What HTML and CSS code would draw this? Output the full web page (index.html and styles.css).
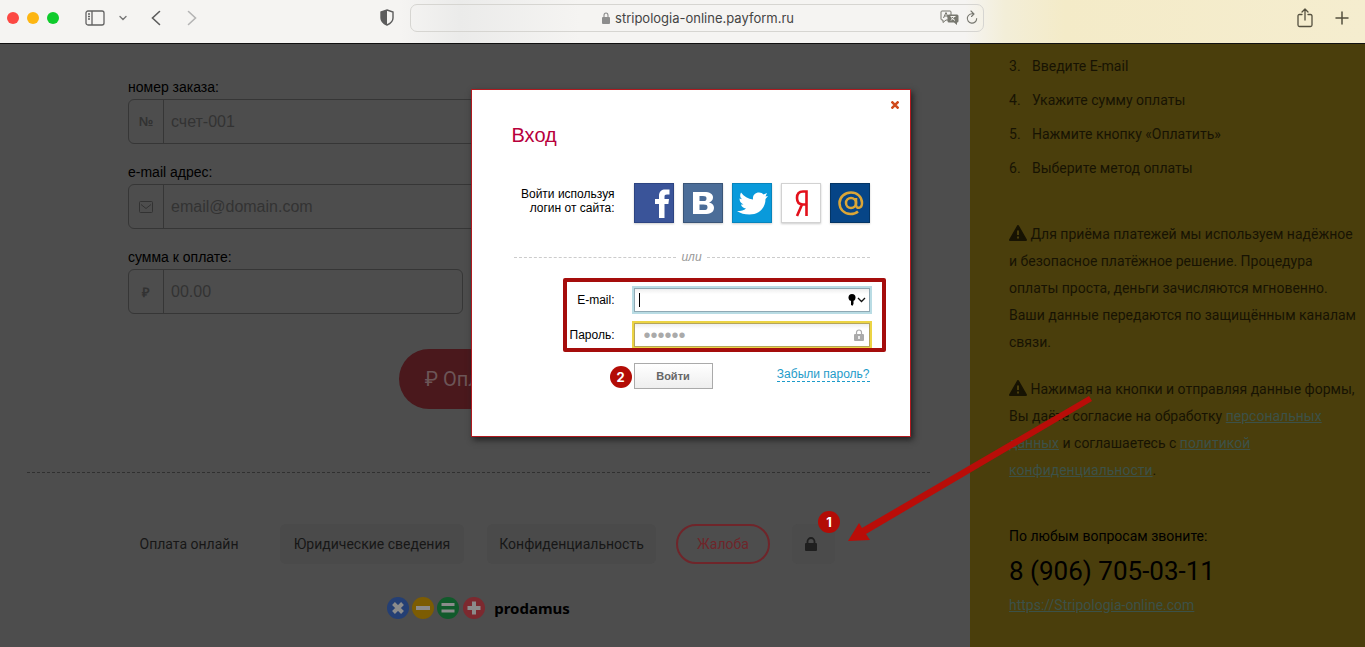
FILE: index.html
```html
<!DOCTYPE html>
<html lang="ru">
<head>
<meta charset="utf-8">
<title>stripologia-online.payform.ru</title>
<link rel="stylesheet" href="styles.css">
</head>
<body>
<header class="toolbar">
  <div class="tools tools-left">
    <div class="lights"><i class="light red"></i><i class="light amber"></i><i class="light green"></i></div>
    <button class="tool sidebar-toggle" aria-label="Боковая панель">
      <svg width="20" height="16" viewBox="0 0 20 16" fill="none" stroke="#626262" stroke-width="1.3"><rect x="1" y="1" width="18" height="14" rx="2"/><path d="M7 1v14M3 4h2M3 6.500h2M3 9h2"/></svg>
    </button>
    <button class="tool chevron" aria-label="Меню">
      <svg width="8" height="6" viewBox="0 0 8 6" fill="none" stroke="#777" stroke-width="1.4" stroke-linecap="round"><path d="M1 1.500l3 3 3-3"/></svg>
    </button>
    <button class="tool back" aria-label="Назад">
      <svg width="10" height="16" viewBox="0 0 10 16" fill="none" stroke="#5c5c5c" stroke-width="1.600" stroke-linecap="round"><path d="M8.500 1.500L1.500 8l7 6.500"/></svg>
    </button>
    <button class="tool" aria-label="Вперёд">
      <svg width="10" height="16" viewBox="0 0 10 16" fill="none" stroke="#b4b4b4" stroke-width="1.600" stroke-linecap="round"><path d="M1.500 1.500L8.500 8l-7 6.500"/></svg>
    </button>
    <button class="tool shield" aria-label="Приватность">
      <svg width="14" height="17" viewBox="0 0 14 17"><path d="M7 1l6 2v6c0 3.500-2.500 5.500-6 7-3.500-1.500-6-3.500-6-7V3z" fill="none" stroke="#5c5c5c" stroke-width="1.400"/><path d="M7 1L1 3v6c0 3.500 2.500 5.500 6 7z" fill="#5c5c5c"/></svg>
    </button>
  </div>
  <div class="address">
    <div class="url">
      <svg width="8" height="12" viewBox="0 0 8 12"><rect y="5" width="8" height="7" rx="1" fill="#8d8d8d"/><path d="M2 5.500V3.500a2 2.500 0 0 1 4 0v2" fill="none" stroke="#8d8d8d" stroke-width="1.100"/></svg>
      <span>stripologia-online.payform.ru</span>
    </div>
    <button class="tool" aria-label="Перевести">
      <svg width="19" height="15" viewBox="0 0 19 15"><path d="M2 1h8q1 0 1 1v7q0 1-1 1H6l-3 2.500V10H2q-1 0-1-1V2q0-1 1-1z" fill="none" stroke="#77776f"/><path d="M3.500 8L6 2.500 8.500 8M4.500 6h3" fill="none" stroke="#77776f"/><path d="M9 4.500h8q1.500 0 1.500 1.500v5q0 1.500-1.500 1.500v2.500L14 12.500H9Q7.500 12.500 7.500 11V6Q7.500 4.500 9 4.500z" fill="#77776f"/><path d="M10.500 6.500h5M14.500 6.500l-3.500 4M11 7.500l4 3" stroke="#f4f3ef" fill="none"/></svg>
    </button>
    <button class="tool" aria-label="Обновить">
      <svg width="12" height="15" viewBox="0 0 12 15" fill="none" stroke="#77776f" stroke-width="1.100" stroke-linecap="round"><path d="M7.500 4A4.700 4.700 0 1 0 10.700 8.500M5 1l3 3-2.500 2.500"/></svg>
    </button>
  </div>
  <div class="tools tools-right">
    <button class="tool" aria-label="Поделиться">
      <svg width="16" height="20" viewBox="0 0 16 20" fill="none" stroke="#54503f" stroke-width="1.300" stroke-linecap="round" stroke-linejoin="round"><path d="M5 6.500H2.500Q1 6.500 1 8v9q0 1.500 1.500 1.500h11Q15 18.500 15 17V8q0-1.500-1.500-1.500H11M8 12V1.500M5 4l3-3 3 3"/></svg>
    </button>
    <button class="tool" aria-label="Новая вкладка">
      <svg width="14" height="14" viewBox="0 0 14 14" stroke="#54503f" stroke-width="1.500" stroke-linecap="round"><path d="M7 1v12M1 7h12"/></svg>
    </button>
  </div>
</header>

<div class="page">
  <main class="main">
    <form class="order">
      <div class="field">
        <label for="order">номер заказа:</label>
        <div class="group"><span class="addon">№</span><input id="order" placeholder="счет-001"></div>
      </div>
      <div class="field">
        <label for="mail">e-mail адрес:</label>
        <div class="group"><span class="addon"><svg width="14" height="12" viewBox="0 0 14 12" fill="none" stroke="#323232"><rect x=".5" y=".5" width="13" height="11" rx="1"/><path d="M2 3.500l5 4 5-4"/></svg></span><input id="mail" placeholder="email@domain.com"></div>
      </div>
      <div class="field short">
        <label for="sum">сумма к оплате:</label>
        <div class="group"><span class="addon">₽</span><input id="sum" placeholder="00.00"></div>
      </div>
    </form>
    <button class="pay">₽ Оплатить</button>
    <footer class="footer">
      <nav class="links">
        <a class="plain" href="#">Оплата онлайн</a>
        <a class="legal" href="#">Юридические сведения</a>
        <a class="privacy" href="#">Конфиденциальность</a>
        <a class="complaint" href="#">Жалоба</a>
        <a class="login" href="#" aria-label="Вход">
          <svg width="12" height="14" viewBox="0 0 12 14"><rect y="6" width="12" height="8" rx="1" fill="#1f1f1f"/><path d="M2.500 7V4.500a3.500 3.500 0 0 1 7 0V7" fill="none" stroke="#1f1f1f" stroke-width="1.800"/></svg>
          <span class="badge">1</span>
        </a>
      </nav>
      <div class="brand">
        <svg width="98" height="22" viewBox="0 0 98 22" stroke="#8b8b8b" stroke-width="4">
          <g stroke="none"><circle cx="11" cy="11" r="11" fill="#243f74"/><circle cx="36" cy="11" r="11" fill="#7c5c03"/><circle cx="61" cy="11" r="11" fill="#115a2b"/><circle cx="87" cy="11" r="11" fill="#7c292f"/></g>
          <path d="M6.500 6.500l9 9M15.500 6.500l-9 9M29 11h14M87 4.500v13M80.500 11h13"/><path d="M54.500 7.500h13M54.500 14h13" stroke-width="3"/>
        </svg>
        <b>prodamus</b>
      </div>
    </footer>
  </main>

  <aside class="aside">
    <ol class="steps" start="3">
      <li>Введите E-mail</li>
      <li>Укажите сумму оплаты</li>
      <li>Нажмите кнопку «Оплатить»</li>
      <li>Выберите метод оплаты</li>
    </ol>
    <p><svg class="warn" width="18" height="16" viewBox="0 0 18 16"><path d="M9 1l8 14H1z" fill="#171303" stroke="#171303" stroke-width="2" stroke-linejoin="round"/><path d="M9 5.500v4.500M9 11.500v2" stroke="#4a3e0c" stroke-width="2"/></svg> Для приёма платежей мы используем надёжное<br>и безопасное платёжное решение. Процедура<br>оплаты проста, деньги зачисляются мгновенно.<br>Ваши данные передаются по защищённым каналам<br>связи.</p>
    <p><svg class="warn" width="18" height="16" viewBox="0 0 18 16"><path d="M9 1l8 14H1z" fill="#171303" stroke="#171303" stroke-width="2" stroke-linejoin="round"/><path d="M9 5.500v4.500M9 11.500v2" stroke="#4a3e0c" stroke-width="2"/></svg> Нажимая на кнопки и отправляя данные формы,<br>Вы даёте согласие на обработку <a href="#">персональных<br>данных</a> и соглашаетесь с <a href="#">политикой<br>конфиденциальности</a>.</p>
    <div class="contact">
      <div>По любым вопросам звоните:</div>
      <div class="phone">8 (906) 705-03-11</div>
      <a href="#">https://Stripologia-online.com</a>
    </div>
  </aside>

  <section class="modal" role="dialog" aria-labelledby="title">
    <button class="close" aria-label="Закрыть"><svg width="8" height="8" viewBox="0 0 8 8" stroke="#d04a1c" stroke-width="2.500"><path d="M.5.5l7 7M7.500.5l-7 7"/></svg></button>
    <h1 id="title">Вход</h1>
    <div class="row social">
      <span>Войти используя<br>логин от сайта:</span>
      <div class="nets">
        <a href="#" class="net" aria-label="Facebook"><svg viewBox="0 0 40 40"><rect width="40" height="40" fill="#2d4482"/><rect x="1" y="1" width="38" height="38" fill="#3a5499"/><path d="M25 35V21h-4v-5h4v-3c0-5 3-6.500 6-6.500h4.500v5H33c-2 0-2.500.7-2.500 2.200V16H35l-.6 5h-3.900v14z" fill="#fff"/></svg></a>
        <a href="#" class="net" aria-label="ВКонтакте"><svg viewBox="0 0 40 40"><rect width="40" height="40" fill="#3a5578"/><rect x="1" y="1" width="38" height="38" fill="#4b6d98"/><path fill-rule="evenodd" d="M10 9h11c6 0 9 2 9 5.500 0 2.500-1.500 4-4 5 3.500.7 5 2.700 5 5.200 0 4.300-3.500 6.300-9.500 6.300H10zm6.500 4v5H20c3 0 3.500-1 3.500-2.600S22.500 13 20 13zm0 8.500V27h4c3 0 4-.8 4-2.800s-1-2.700-4-2.700z" fill="#fff"/></svg></a>
        <a href="#" class="net" aria-label="Twitter"><svg viewBox="0 0 40 40"><rect width="40" height="40" fill="#0784bc"/><rect x="1" y="1" width="38" height="38" fill="#099adb"/><path d="M5 28c4 0 7-.5 9-2.500-3-.5-4.500-2-5-4h2.500C8.500 20 7.500 18 7.500 15.500l2.500.8C7.500 14 8 11.500 9 9.500c3 4 7 6.500 12 7-.5-4 2-7 6-7 2 0 3.500.7 4.500 2l3.500-1.500-1.500 3.500 2.500-.5-2.500 3C33.500 25 27 31.500 17.500 31.500 12.500 31.500 8.500 30.500 5 28z" fill="#fff"/></svg></a>
        <a href="#" class="net" aria-label="Яндекс"><svg viewBox="0 0 40 40"><rect x=".5" y=".5" width="39" height="39" fill="#fff" stroke="#d2d2d2"/><path d="M25.500 33V8.500H22c-4 0-6 2.500-6 6.500s2 6.500 6 6.500h3.500M21 21.500L16 33" fill="none" stroke="#e3101b" stroke-width="2.600"/></svg></a>
        <a href="#" class="net" aria-label="Mail.ru"><svg viewBox="0 0 40 40"><rect width="40" height="40" fill="#043565"/><rect x="1" y="1" width="38" height="38" fill="#064587"/><g fill="none" stroke="#dba637" stroke-width="2.500"><circle cx="21" cy="20" r="5"/><path d="M26 15v7c0 4 6 4 6-2 0-6.500-5-10.500-11-10.500S9.500 14 9.500 20 14 31 20.500 31c3 0 5.500-.7 7.500-2.500"/></g></svg></a>
      </div>
    </div>
    <div class="or"><em>или</em></div>
    <form class="signin">
      <div class="row">
        <label for="login">E-mail:</label>
        <div class="box blue"><input id="login" type="text"><i class="caret"></i>
          <svg class="key" width="18" height="12" viewBox="0 0 18 12"><circle cx="4" cy="3.500" r="3.500"/><path d="M3 6h2.500v4L4.200 12 3 10.500z"/><path d="M10 4l3.500 3.500L17 4" fill="none" stroke="#111" stroke-width="1.300"/></svg></div>
      </div>
      <div class="row">
        <label for="password">Пароль:</label>
        <div class="box yellow"><input id="password" type="password" placeholder="••••••">
          <svg class="lock" width="10" height="12" viewBox="0 0 10 12"><rect y="5" width="10" height="7" rx="1" fill="#aaa"/><path d="M2.500 5.500V3.500a2.500 2.500 0 0 1 5 0v2" fill="none" stroke="#aaa" stroke-width="1.200"/><path d="M5 7v3" stroke="#fff" stroke-width="1.500"/></svg></div>
      </div>
      <div class="actions">
        <div class="enter"><button type="button">Войти</button><span class="badge">2</span></div>
        <a href="#">Забыли пароль?</a>
      </div>
      <div class="frame"></div>
    </form>
  </section>

  <svg class="arrow" width="250" height="152" viewBox="0 0 250 152"><path d="M2 146L13 128l3 5L243 1l3 5L20 139l4 6z" fill="#b90d08"/></svg>
</div>
</body>
</html>
```
FILE: styles.css
```css
* { box-sizing: border-box; }
html, body { height: 100%; }
body {
  margin: 0;
  display: flex;
  flex-direction: column;
  overflow: hidden;
  background: #4d4d4d;
  font-family: "Liberation Sans", Arial, sans-serif;
  font-size: 12px;
  color: #000;
}
button { font: inherit; cursor: pointer; }
a { color: inherit; }

/* Browser toolbar */
.toolbar {
  flex: none;
  height: 44px;
  padding-bottom: 8px;
  display: grid;
  grid-template-columns: 410px 1fr 381px;
  align-items: center;
  border-bottom: 1px solid #111;
  background: linear-gradient(90deg, #f5f4f2 0 400px, #ebebea 460px, #f5f4f2 580px calc(100% - 400px), #f3eed8 calc(100% - 360px), #f4ebc8 calc(100% - 300px), #f5edcf);
}
.tools { display: flex; align-items: center; }
.tools-left { padding: 0 16px 0 7px; }
.tools-right { justify-content: flex-end; gap: 22px; padding-right: 16px; }
.tool { display: flex; padding: 0; border: 0; background: none; }
.lights { display: flex; gap: 8px; margin-right: 26px; }
.light { width: 12px; height: 12px; border-radius: 50%; }
.red { background: #fc4843; }
.amber { background: #fdb612; }
.green { background: #0fcb2c; }
.chevron { margin: 0 24px 0 14px; }
.back { margin-right: 26px; }
.shield { margin-left: auto; }
.address {
  height: 28px;
  padding: 0 5px 0 0;
  display: flex;
  align-items: center;
  gap: 7px;
  border: 1px solid #d6d5d1;
  border-radius: 7px;
}
.url {
  flex: 1;
  display: flex;
  align-items: center;
  justify-content: center;
  gap: 5px;
  padding-left: 52px;
  font: 13px Inter, sans-serif;
  color: #444;
}

.page { position: relative; flex: 1; display: flex; min-height: 0; }

/* Order form */
.main { flex: 1; min-width: 0; padding: 33px 40px 0 27px; }
.order { display: flex; flex-direction: column; gap: 18px; padding: 0 101px; }
.field { display: flex; flex-direction: column; gap: 2px; }
.field.short { width: 335px; }
.field label { font-size: 14px; line-height: 20px; }
.group {
  display: flex;
  height: 45px;
  border: 1px solid #363636;
  border-radius: 6px;
}
.addon {
  width: 35px;
  display: flex;
  align-items: center;
  justify-content: center;
  border-right: 1px solid #363636;
  font-size: 13px;
  font-weight: bold;
  color: #323232;
}
.group input {
  flex: 1;
  min-width: 0;
  padding: 0 7px;
  border: 0;
  outline: 0;
  background: none;
  font: 16px "Liberation Sans", Arial, sans-serif;
}
.group input::placeholder { color: #333; opacity: 1; }
.pay {
  display: block;
  width: 160px;
  height: 60px;
  margin: 35px auto 63px;
  padding: 0;
  border: 0;
  border-radius: 30px;
  background: #4a181c;
  color: #6c5557;
  font: 20px Roboto, sans-serif;
}
.footer { border-top: 1px dashed #303030; padding-top: 51px; }
.links {
  display: flex;
  justify-content: center;
  height: 40px;
  margin-left: 7px;
  font: 14px Roboto, sans-serif;
  color: #171717;
}
.links a {
  display: flex;
  align-items: center;
  justify-content: center;
  text-decoration: none;
  white-space: nowrap;
  border-radius: 6px;
}
.plain { width: 120px; margin-right: 31px; }
.legal { width: 184px; margin-right: 23px; background: #4a4a4a; }
.privacy { width: 169px; margin-right: 20px; background: #4a4a4a; }
.links .complaint { width: 94px; margin-right: 22px; border: 2px solid #6f252a; border-radius: 20px; color: #6f252a; }
.login { position: relative; width: 43px; padding-right: 6px; background: #4b4b4b; }
.badge {
  position: absolute;
  display: flex;
  align-items: center;
  justify-content: center;
  width: 22px;
  height: 22px;
  border-radius: 50%;
  background: #b30c06;
  color: #fff;
  font: bold 13px Inter, sans-serif;
}
.login .badge { top: -13px; left: 26px; }
.brand {
  display: flex;
  align-items: center;
  justify-content: center;
  gap: 9px;
  margin-top: 33px;
  font: 15px/22px "Noto Sans", sans-serif;
}

/* Sidebar */
.aside {
  flex: none;
  width: 395px;
  padding: 5px 0 0 39px;
  background: #4a3e0c;
  color: #171303;
  font: 14px/27px Roboto, sans-serif;
  white-space: nowrap;
}
.aside p { margin: 0 0 20px; }
.aside a { color: #3c5148; }
.steps { margin: 0 0 36px; padding-left: 23px; line-height: 34px; counter-reset: step 2; }
.steps li { list-style: none; display: flex; counter-increment: step; }
.steps li::before { content: counter(step) "."; width: 23px; margin-left: -23px; }
.warn { vertical-align: -2px; }
.contact { padding-top: 19px; color: #000; }
.phone { font-size: 26px; line-height: 42px; }

/* Sign-in window */
.modal {
  position: absolute;
  top: 45px;
  left: calc(50% - 212px);
  width: 440px;
  padding: 33px 40px 47px;
  border: 1px solid #b0191e;
  background: #fff;
  box-shadow: 2px 3px 6px #222;
}
.close { position: absolute; top: 11px; right: 11px; padding: 0; border: 0; background: none; line-height: 0; }
h1 { margin: 0 0 36px; font-size: 20px; line-height: 24px; font-weight: normal; color: #b8003c; }
.row { display: grid; grid-template-columns: 103px 236px; column-gap: 19px; align-items: center; text-align: right; }
.social { line-height: 14px; padding-bottom: 27px; }
.social > span { margin-top: -4px; }
.nets { display: flex; gap: 9px; }
.net { flex: none; width: 40px; height: 40px; box-shadow: 0 1px 2px #ccc; }
.net svg { display: block; }
.or { display: flex; align-items: center; gap: 5px; margin-left: 2px; line-height: 14px; color: #999; }
.or::before, .or::after { content: ""; flex: 1; border-top: 1px dashed #ccc; }
.signin { position: relative; display: grid; gap: 11px; padding-top: 24px; }
.box { position: relative; height: 24px; border: 1px solid #8fa9b4; box-shadow: 0 0 0 2px #b9dce4; }
.yellow { border-color: #b5a55c; box-shadow: 0 0 0 2px #ecd444; }
.box input { display: block; width: 100%; height: 100%; padding: 0 9px; border: 0; outline: 0; background: linear-gradient(#eee, #fff 5px); font: 20px "Liberation Sans", Arial, sans-serif; }
.box input::placeholder { color: #aaa; opacity: 1; }
.caret { position: absolute; left: 4px; top: 4px; width: 1px; height: 14px; background: #000; }
.key { position: absolute; right: 3px; top: 5px; }
.lock { position: absolute; right: 5px; top: 5px; }
.actions { display: flex; justify-content: space-between; align-items: flex-start; padding: 5px 0 0 122px; }
.enter { position: relative; }
.enter button {
  width: 79px;
  height: 26px;
  padding: 0;
  border: 1px solid #aaa;
  background: linear-gradient(#fff, #eee);
  font-size: 11px;
  font-weight: bold;
  color: #666;
}
.enter .badge { top: 3px; left: -24px; }
.actions a { margin-top: 4px; line-height: 14px; color: #1d9bc9; text-decoration: none; border-bottom: 1px dashed #1d9bc9; }
.frame { position: absolute; top: 14px; left: 51px; width: 323px; height: 74px; border: 4px solid #a50d0c; border-radius: 2px; pointer-events: none; }

.arrow { position: absolute; top: 351px; left: calc(50% + 163px); pointer-events: none; }
```
